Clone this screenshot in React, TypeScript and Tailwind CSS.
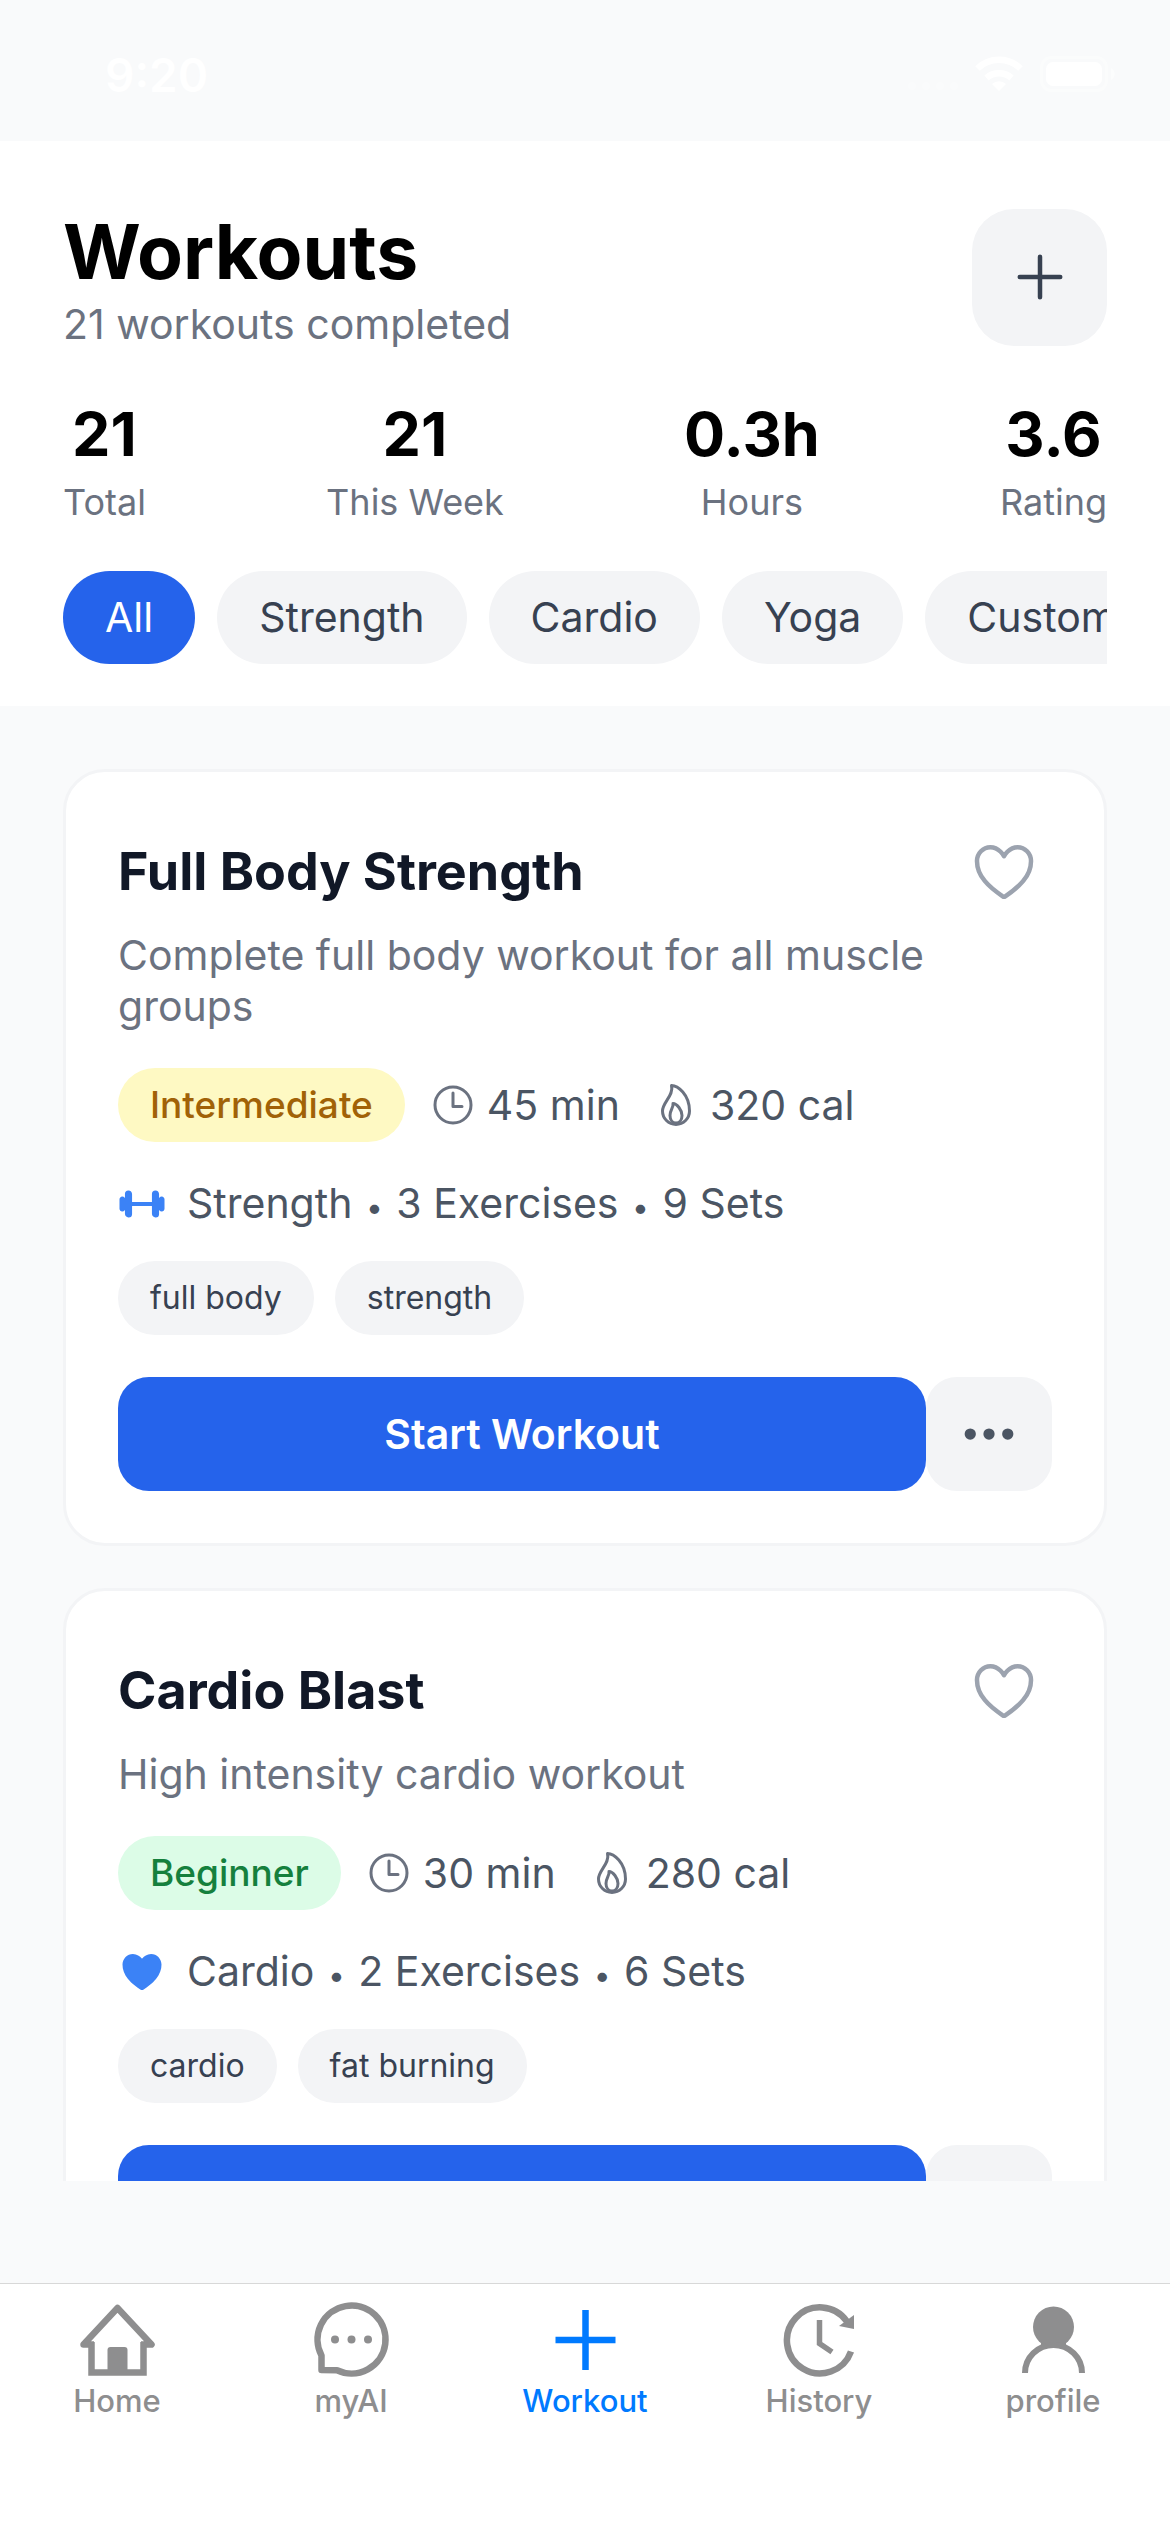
import { useState } from "react";
import type { ReactNode } from "react";
import clsx from "clsx";
import {
  IoAdd,
  IoBarbell,
  IoEllipsisHorizontal,
  IoFlameOutline,
  IoHeart,
  IoHeartOutline,
  IoTimeOutline,
} from "react-icons/io5";

type Workout = {
  id: number;
  title: string;
  description: string;
  level: "Beginner" | "Intermediate";
  minutes: number;
  calories: number;
  category: string;
  exercises: number;
  sets: number;
  tags: string[];
};

const stats = [
  { label: "Total", value: "21" },
  { label: "This Week", value: "21" },
  { label: "Hours", value: "0.3h" },
  { label: "Rating", value: "3.6" },
];

const categories = ["All", "Strength", "Cardio", "Yoga", "Custom"];

const workouts: Workout[] = [
  {
    id: 1,
    title: "Full Body Strength",
    description: "Complete full body workout for all muscle groups",
    level: "Intermediate",
    minutes: 45,
    calories: 320,
    category: "Strength",
    exercises: 3,
    sets: 9,
    tags: ["full body", "strength"],
  },
  {
    id: 2,
    title: "Cardio Blast",
    description: "High intensity cardio workout",
    level: "Beginner",
    minutes: 30,
    calories: 280,
    category: "Cardio",
    exercises: 2,
    sets: 6,
    tags: ["cardio", "fat burning"],
  },
];

const levelStyles = {
  Beginner: "bg-[#dcfce7] text-[#15803d]",
  Intermediate: "bg-[#fef9c3] text-[#a16207]",
};

function StatusBar() {
  return (
    <div className="flex h-[141px] shrink-0 items-start justify-between pt-[45px] pr-[54px] pl-[105px] text-white">
      <span className="text-[46px] leading-[60px] font-semibold">9:20</span>
      <svg width="210" height="60" viewBox="0 0 210 60" fill="currentColor" aria-hidden="true">
        <g opacity="0.25">
          <circle cx="6" cy="41" r="4" />
          <circle cx="20" cy="41" r="4" />
          <circle cx="34" cy="41" r="4" />
          <circle cx="48" cy="41" r="4" />
        </g>
        <path d="M93 46l-7-7a10.500 10.500 0 0 1 14 0z" />
        <g fill="none" stroke="currentColor" strokeWidth="6.500">
          <path d="M80.500 33a19 19 0 0 1 25 0" />
          <path d="M71.500 23.500a31 31 0 0 1 43 0" />
        </g>
        <rect x="135.500" y="12.500" width="65" height="33" rx="10" fill="none" stroke="currentColor" strokeWidth="3" opacity="0.4" />
        <rect x="140" y="17" width="56" height="24" rx="7" />
        <path d="M205 23c5 2 5 10 0 12z" opacity="0.5" />
      </svg>
    </div>
  );
}

function Header({ category, onSelect }: { category: string; onSelect: (c: string) => void }) {
  return (
    <header className="shrink-0 bg-white px-[63px] pt-[63px] pb-[42px]">
      <div className="flex items-center justify-between">
        <div>
          <h1 className="text-[75px] leading-[95px] font-bold text-black">Workouts</h1>
          <p className="text-[41px] leading-[51px] text-[#6b7280]">21 workouts completed</p>
        </div>
        <button
          aria-label="Add workout"
          className="flex h-[137px] w-[135px] items-center justify-center rounded-[42px] bg-[#f3f4f6]"
        >
          <IoAdd size={72} className="text-[#374151]" />
        </button>
      </div>

      {/* Stats */}
      <div className="mt-[42px] flex justify-between">
        {stats.map((stat) => (
          <div key={stat.label} className="text-center">
            <p className="text-[61px] leading-[84px] font-bold text-black">{stat.value}</p>
            <p className="text-[36px] leading-[53px] text-[#6b7280]">{stat.label}</p>
          </div>
        ))}
      </div>

      {/* Category filter */}
      <div className="mt-[42px] flex gap-[22px] overflow-hidden">
        {categories.map((name) => (
          <button
            key={name}
            onClick={() => onSelect(name)}
            className={clsx(
              "shrink-0 rounded-full px-[42px] py-[21px] text-[41px] leading-[51px]",
              category === name ? "bg-[#2563eb] text-white" : "bg-[#f3f4f6] text-[#374151]"
            )}
          >
            {name}
          </button>
        ))}
      </div>
    </header>
  );
}

function Dot() {
  return (
    <>
      {" "}
      <span className="mx-[2px] text-[30px] leading-none">•</span>{" "}
    </>
  );
}

function WorkoutCard({ workout }: { workout: Workout }) {
  const [liked, setLiked] = useState(false);
  const CategoryIcon = workout.category === "Cardio" ? IoHeart : IoBarbell;

  return (
    <article className="shrink-0 rounded-[42px] border-[3px] border-[#f3f4f6] bg-white p-[52px]">
      <div className="flex items-center justify-between">
        <h2 className="text-[52px] leading-[74px] font-bold text-[#111827]">{workout.title}</h2>
        <button aria-label="Favorite" onClick={() => setLiked(!liked)} className="p-3 text-[#9ca3af]">
          {liked ? <IoHeart size={72} /> : <IoHeartOutline size={72} />}
        </button>
      </div>
      <p className="mt-[10px] text-[41px] leading-[51px] text-[#6b7280]">{workout.description}</p>

      <div className="mt-9 flex items-center text-[41px] leading-[51px] text-[#4b5563]">
        <span
          className={clsx(
            "mr-6 rounded-full px-8 py-[11px] text-[37px] leading-[52px] font-medium",
            levelStyles[workout.level]
          )}
        >
          {workout.level}
        </span>
        <IoTimeOutline size={48} className="text-[#6b7280]" />
        <span className="mr-8 ml-[10px]">{workout.minutes} min</span>
        <IoFlameOutline size={48} className="text-[#6b7280]" />
        <span className="ml-[10px]">{workout.calories} cal</span>
      </div>

      <div className="mt-9 flex items-center gap-[21px] text-[41px] leading-[51px] text-[#4b5563]">
        <CategoryIcon size={48} className="text-[#3b82f6]" />
        <p>
          {workout.category}
          <Dot />
          {workout.exercises} Exercises
          <Dot />
          {workout.sets} Sets
        </p>
      </div>

      <ul className="mt-8 flex gap-[21px]">
        {workout.tags.map((tag) => (
          <li key={tag} className="rounded-full bg-[#f3f4f6] px-8 py-4 text-[32px] leading-[42px] text-[#374151]">
            {tag}
          </li>
        ))}
      </ul>

      <div className="mt-[42px] flex">
        <button className="h-[114px] flex-1 rounded-[31px] bg-[#2563eb] text-[41px] leading-[51px] font-semibold text-white">
          Start Workout
        </button>
        <button
          aria-label="More options"
          className="flex h-[114px] w-[126px] items-center justify-center rounded-[31px] bg-[#f3f4f6]"
        >
          <IoEllipsisHorizontal size={60} className="text-[#4b5563]" />
        </button>
      </div>
    </article>
  );
}

function TabIcon({ children }: { children: ReactNode }) {
  return (
    <svg width="78" height="78" viewBox="0 0 78 78" fill="none" stroke="currentColor" strokeWidth="6.500" aria-hidden="true">
      {children}
    </svg>
  );
}

const tabs = [
  {
    name: "Home",
    icon: (
      <TabIcon>
        <path d="M16 44.500H5.500L39.500 8L73.500 44.500H63" strokeLinejoin="round" />
        <path d="M13.500 42V72.500H65.500V42" />
        <rect x="29.500" y="47" width="20" height="26" rx="3" fill="currentColor" stroke="none" />
      </TabIcon>
    ),
  },
  {
    name: "myAI",
    icon: (
      <TabIcon>
        <path d="M9.500 55.500A34 34 0 1 1 25 70.300L9.500 70Z" strokeLinejoin="round" />
        <g fill="currentColor" stroke="none">
          <circle cx="23" cy="39.500" r="4" />
          <circle cx="39.500" cy="39.500" r="4" />
          <circle cx="56" cy="39.500" r="4" />
        </g>
      </TabIcon>
    ),
  },
  {
    name: "Workout",
    icon: (
      <TabIcon>
        <path d="M39.500 10V70M9.500 40H69.500" />
      </TabIcon>
    ),
  },
  {
    name: "History",
    icon: (
      <TabIcon>
        <path d="M71 51.500A33 33 0 1 1 67 21.500" />
        <path d="M74 15V29L59 26Z" fill="currentColor" stroke="none" />
        <path d="M39.500 20V43.500L52 52" strokeWidth="5.500" />
      </TabIcon>
    ),
  },
  {
    name: "profile",
    icon: (
      <TabIcon>
        <circle cx="39.500" cy="27" r="20.500" fill="currentColor" stroke="none" />
        <path d="M27 38V48H52V38Z" fill="currentColor" stroke="none" />
        <path d="M11 73A28.500 28 0 0 1 68 73Z" fill="white" stroke="none" />
        <path d="M11 73A28.500 28 0 0 1 68 73" strokeWidth="6" />
      </TabIcon>
    ),
  },
];

function TabBar() {
  return (
    <nav className="grid h-[249px] shrink-0 grid-cols-5 items-start border-t border-[#d8d8d8] bg-white pt-4">
      {tabs.map((tab) => (
        <a
          key={tab.name}
          href="#"
          aria-current={tab.name === "Workout" ? "page" : undefined}
          className={clsx(
            "flex flex-col items-center gap-1 text-[31px] leading-[38px] font-medium",
            tab.name === "Workout" ? "text-[#007aff]" : "text-[#8e8e8f]"
          )}
        >
          {tab.icon}
          {tab.name}
        </a>
      ))}
    </nav>
  );
}

export default function App() {
  const [category, setCategory] = useState("All");
  const visible = workouts.filter((w) => category === "All" || w.category === category);

  return (
    <div className="flex h-screen flex-col bg-[#f9fafb] font-['Inter',sans-serif]">
      <StatusBar />
      <Header category={category} onSelect={setCategory} />
      <main className="mb-[102px] flex min-h-0 flex-1 flex-col gap-[42px] overflow-hidden px-[63px] pt-[63px]">
        {visible.map((workout) => (
          <WorkoutCard key={workout.id} workout={workout} />
        ))}
      </main>
      <TabBar />
    </div>
  );
}
